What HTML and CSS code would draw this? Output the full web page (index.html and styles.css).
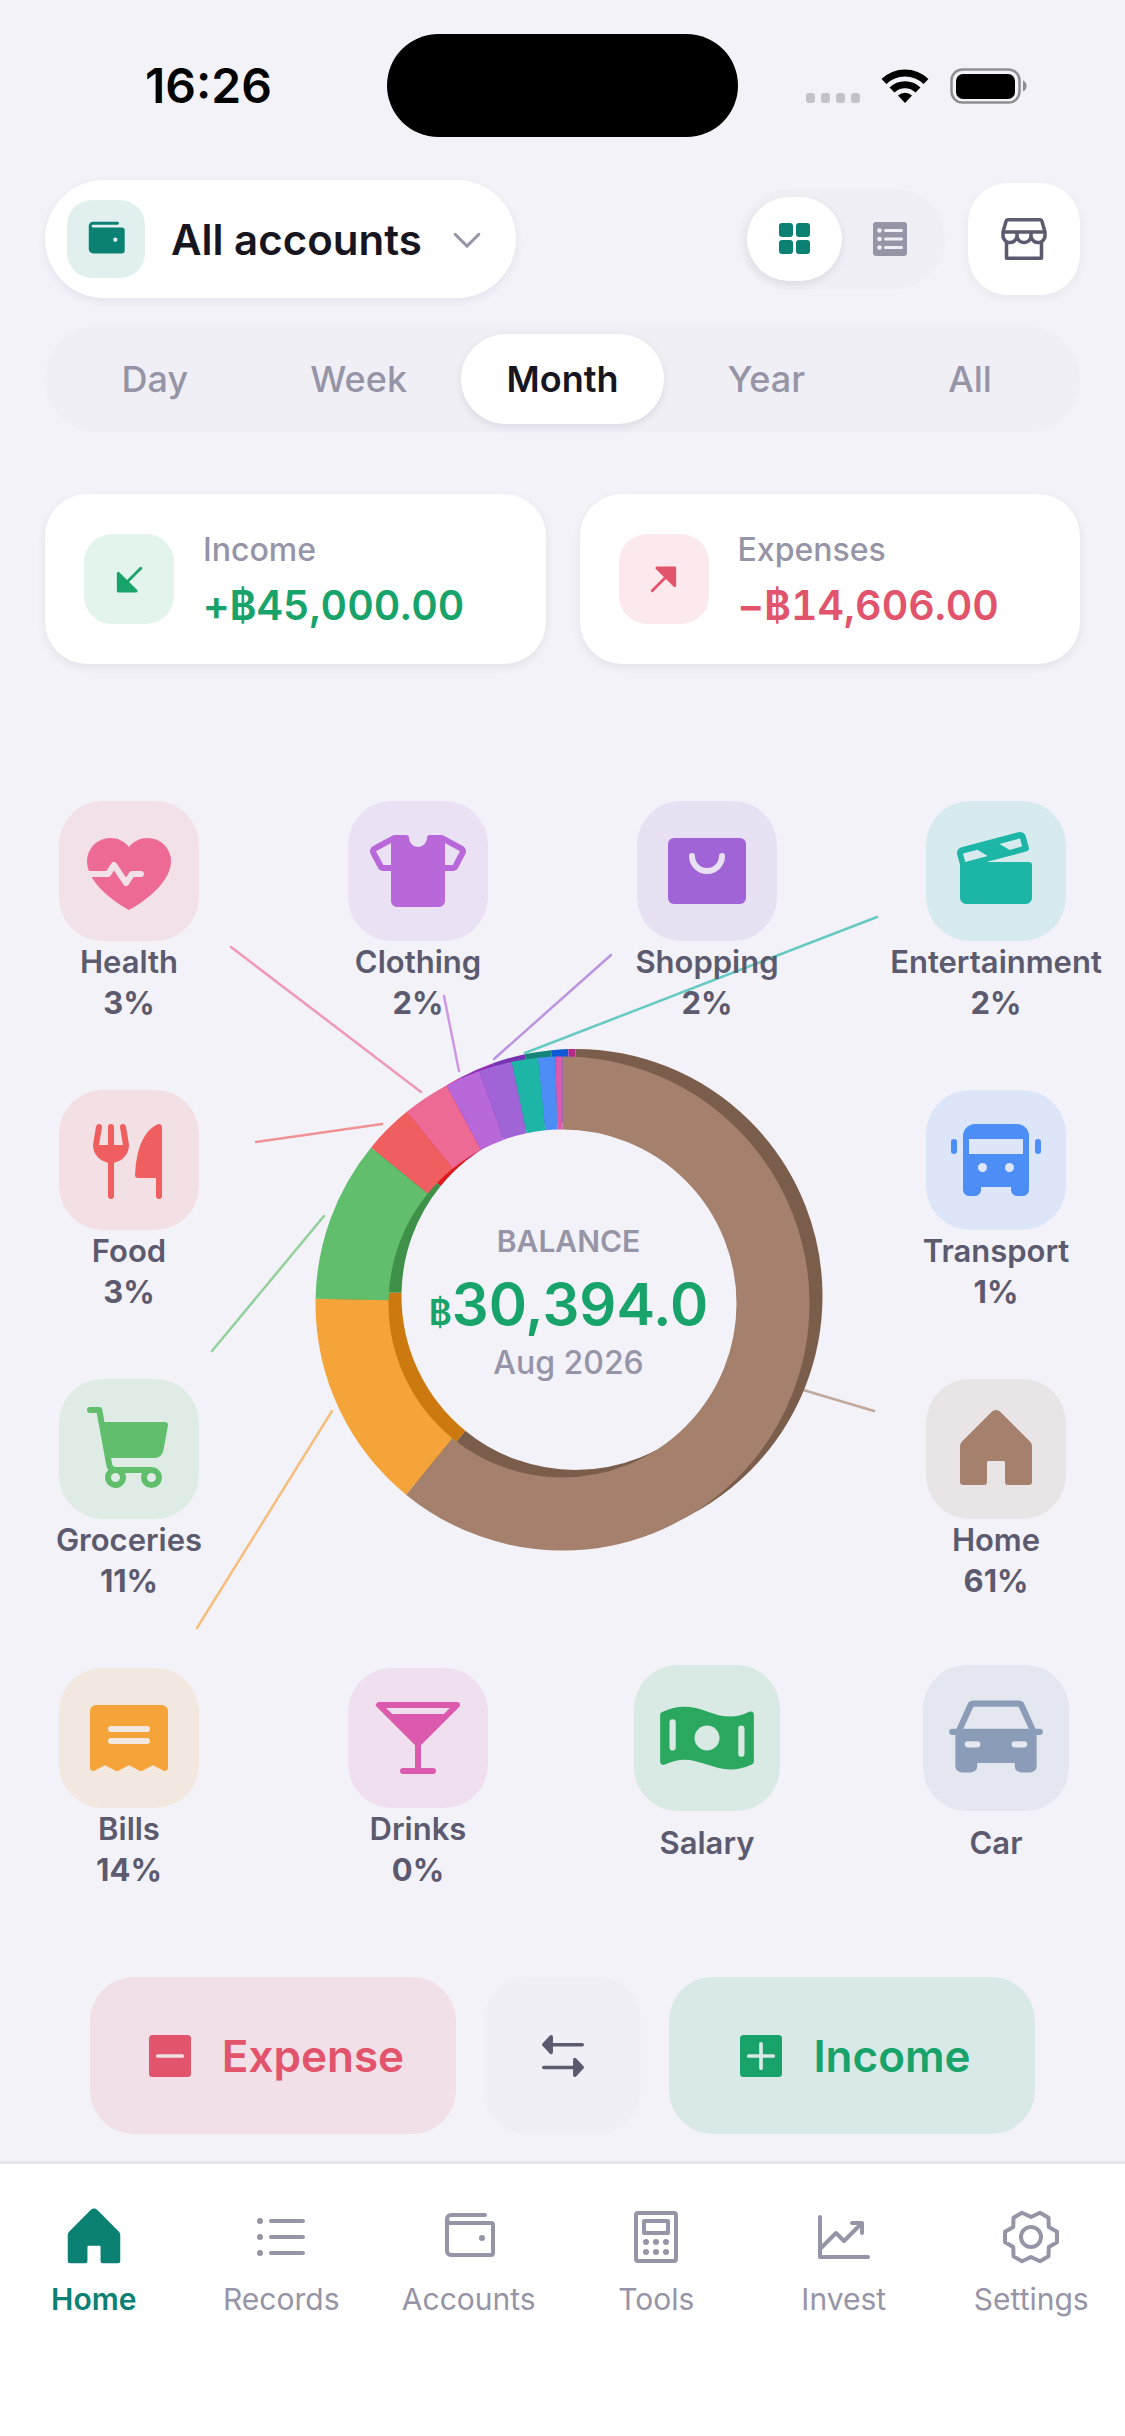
FILE: index.html
```html
<!DOCTYPE html>
<html lang="en">
<head>
  <meta charset="utf-8">
  <meta name="viewport" content="width=device-width, initial-scale=1.0">
  <title>Home</title>
  <link rel="stylesheet" href="styles.css">
</head>
<body>

  <div class="status">
    <span class="time">16:26</span>
    <span class="island"></span>
    <div class="signals">
      <svg width="54" height="36" viewBox="0 0 54 36" fill="#c3c2c8"><rect y="25" width="9" height="10" rx="3"/><rect x="15" y="25" width="9" height="10" rx="3"/><rect x="30" y="25" width="9" height="10" rx="3"/><rect x="45" y="25" width="9" height="10" rx="3"/></svg>
      <svg width="48" height="36" viewBox="0 0 48 36" fill="none" stroke="#000" stroke-width="7"><path d="M3 13.500a30 30 0 0 1 42 0"/><path d="M11 22a18.500 18.500 0 0 1 26 0"/><path d="M24 35l-7-7.500a10.500 10.500 0 0 1 14 0z" fill="#000" stroke="none"/></svg>
      <svg width="78" height="36" viewBox="0 0 78 36"><rect x="1.500" y="1.500" width="68" height="33" rx="11" fill="none" stroke="#8e8e92" stroke-width="2.500"/><rect x="6" y="6" width="59" height="25" rx="7"/><path d="M73 12.500a6 6 0 0 1 0 11z" fill="#8e8e92"/></svg>
    </div>
  </div>

  <header class="top">
    <button class="account">
      <span class="account-icon"><svg width="46" height="46" viewBox="0 0 256 256" fill="#0b8174"><path d="M216,64H56a8,8,0,0,1,0-16H192a8,8,0,0,0,0-16H56A24,24,0,0,0,32,56V184a24,24,0,0,0,24,24H216a16,16,0,0,0,16-16V80A16,16,0,0,0,216,64Zm-36,80a12,12,0,1,1,12-12A12,12,0,0,1,180,144Z"/></svg></span>
      All accounts
      <svg width="38" height="38" viewBox="0 0 256 256" class="line" stroke-width="20"><path d="M48,96l80,80 80-80"/></svg>
    </button>
    <div class="toggle">
      <button class="view on" aria-label="Grid view"><svg width="32" height="32" viewBox="0 0 32 32" fill="#0b8174"><rect width="14" height="14" rx="3"/><rect x="17" width="14" height="14" rx="3"/><rect y="17" width="14" height="14" rx="3"/><rect x="17" y="17" width="14" height="14" rx="3"/></svg></button>
      <button class="view" aria-label="List view"><svg width="34" height="34" viewBox="0 0 34 34"><rect width="34" height="34" rx="3" fill="#9694a7"/><g fill="#f0eff5"><circle cx="6.500" cy="8.500" r="2.300"/><circle cx="6.500" cy="17" r="2.300"/><circle cx="6.500" cy="25.500" r="2.300"/><rect x="11" y="7" width="19" height="3" rx="1.500"/><rect x="11" y="15.500" width="19" height="3" rx="1.500"/><rect x="11" y="24" width="19" height="3" rx="1.500"/></g></svg></button>
    </div>
    <button class="store" aria-label="Store"><svg width="56" height="56" viewBox="0 0 256 256" fill="#5c5a6e"><path d="M232,96a7.890,7.890,0,0,0-.3-2.200L217.350,43.600A16.070,16.070,0,0,0,202,32H54A16.070,16.070,0,0,0,38.650,43.600L24.310,93.800A7.890,7.890,0,0,0,24,96h0v16a40,40,0,0,0,16,32v72a8,8,0,0,0,8,8H208a8,8,0,0,0,8-8V144a40,40,0,0,0,16-32V96ZM54,48H202l11.420,40H42.610Zm50,56h48v8a24,24,0,0,1-48,0Zm-16,0v8a24,24,0,0,1-35.120,21.260,7.880,7.880,0,0,0-1.820-1.060A24,24,0,0,1,40,112v-8ZM200,208H56V151.200a40.570,40.570,0,0,0,8,.8,40,40,0,0,0,32-16,40,40,0,0,0,64,0,40,40,0,0,0,32,16,40.570,40.570,0,0,0,8-.8Zm16-96a24,24,0,0,1-11.070,20.200,8.080,8.080,0,0,0-1.800,1.050A24,24,0,0,1,168,112v-8h48Z"/></svg></button>
  </header>

  <div class="periods">
    <button class="period">Day</button>
    <button class="period">Week</button>
    <button class="period on">Month</button>
    <button class="period">Year</button>
    <button class="period">All</button>
  </div>

  <div class="cards">
    <div class="card">
      <span class="card-icon green"><svg width="45" height="45" viewBox="0 0 256 256" fill="currentColor" stroke="currentColor" stroke-width="16" stroke-linecap="round" stroke-linejoin="round"><path d="M64,92V194H166Z"/><path d="M192,64L110,146"/></svg></span>
      <div>
        <div class="card-label">Income</div>
        <div class="amount green-text">+฿45,000.00</div>
      </div>
    </div>
    <div class="card">
      <span class="card-icon red"><svg width="45" height="45" viewBox="0 0 256 256" fill="currentColor" stroke="currentColor" stroke-width="16" stroke-linecap="round" stroke-linejoin="round"><path d="M192,164V62H90Z"/><path d="M64,192L146,110"/></svg></span>
      <div>
        <div class="card-label">Expenses</div>
        <div class="amount red-text">−฿14,606.00</div>
      </div>
    </div>
  </div>

  <main class="wheel">
    <!-- leader lines and donut -->
    <svg class="chart" viewBox="0 801 1125 1156">
      <g stroke-width="2.500" stroke-linecap="round" opacity=".65">
        <path d="M231 947L421 1092" stroke="#ed6a94"/>
        <path d="M256 1142L382 1124" stroke="#ef5f5f"/>
        <path d="M324 1216L212 1351" stroke="#60be6c"/>
        <path d="M332 1411L197 1628" stroke="#f5a43a"/>
        <path d="M444 996L459 1071" stroke="#b968d9"/>
        <path d="M494 1059L611 955" stroke="#a064d6"/>
        <path d="M525 1053L877 917" stroke="#1db5a6"/>
        <path d="M800 1389L874 1411" stroke="#a5816d"/>
      </g>
      <g fill="none" stroke-width="73" transform="rotate(-90 575.500 1296)">
        <circle cx="575.500" cy="1296" r="210.500" pathLength="360" stroke="#7b5d4c" stroke-dasharray="219.300 360"/>
        <circle cx="575.500" cy="1296" r="210.500" pathLength="360" stroke="#cc7a0f" stroke-dasharray="51.800 360" stroke-dashoffset="-219.300"/>
        <circle cx="575.500" cy="1296" r="210.500" pathLength="360" stroke="#3f9149" stroke-dasharray="38.100 360" stroke-dashoffset="-271.100"/>
        <circle cx="575.500" cy="1296" r="210.500" pathLength="360" stroke="#dc1a1e" stroke-dasharray="11.700 360" stroke-dashoffset="-309.200"/>
        <circle cx="575.500" cy="1296" r="210.500" pathLength="360" stroke="#d3235e" stroke-dasharray="11.100 360" stroke-dashoffset="-320.900"/>
        <circle cx="575.500" cy="1296" r="210.500" pathLength="360" stroke="#8d30b2" stroke-dasharray="8.300 360" stroke-dashoffset="-332"/>
        <circle cx="575.500" cy="1296" r="210.500" pathLength="360" stroke="#7532b1" stroke-dasharray="7.800 360" stroke-dashoffset="-340.300"/>
        <circle cx="575.500" cy="1296" r="210.500" pathLength="360" stroke="#148476" stroke-dasharray="6.200 360" stroke-dashoffset="-348.100"/>
        <circle cx="575.500" cy="1296" r="210.500" pathLength="360" stroke="#1059d8" stroke-dasharray="4 360" stroke-dashoffset="-354.300"/>
        <circle cx="575.500" cy="1296" r="210.500" pathLength="360" stroke="#b52a86" stroke-dasharray="1.700 360" stroke-dashoffset="-358.300"/>
      </g>
      <g fill="none" stroke-width="73" transform="rotate(-90 562.500 1303.500)">
        <circle cx="562.500" cy="1303.500" r="210.500" pathLength="360" stroke="#a5816d" stroke-dasharray="219.300 360"/>
        <circle cx="562.500" cy="1303.500" r="210.500" pathLength="360" stroke="#f5a43a" stroke-dasharray="51.800 360" stroke-dashoffset="-219.300"/>
        <circle cx="562.500" cy="1303.500" r="210.500" pathLength="360" stroke="#60be6c" stroke-dasharray="38.100 360" stroke-dashoffset="-271.100"/>
        <circle cx="562.500" cy="1303.500" r="210.500" pathLength="360" stroke="#ef5f5f" stroke-dasharray="11.700 360" stroke-dashoffset="-309.200"/>
        <circle cx="562.500" cy="1303.500" r="210.500" pathLength="360" stroke="#ed6a94" stroke-dasharray="11.100 360" stroke-dashoffset="-320.900"/>
        <circle cx="562.500" cy="1303.500" r="210.500" pathLength="360" stroke="#b968d9" stroke-dasharray="8.300 360" stroke-dashoffset="-332"/>
        <circle cx="562.500" cy="1303.500" r="210.500" pathLength="360" stroke="#a064d6" stroke-dasharray="7.800 360" stroke-dashoffset="-340.300"/>
        <circle cx="562.500" cy="1303.500" r="210.500" pathLength="360" stroke="#1db5a6" stroke-dasharray="6.200 360" stroke-dashoffset="-348.100"/>
        <circle cx="562.500" cy="1303.500" r="210.500" pathLength="360" stroke="#4d8df6" stroke-dasharray="4 360" stroke-dashoffset="-354.300"/>
        <circle cx="562.500" cy="1303.500" r="210.500" pathLength="360" stroke="#db5aae" stroke-dasharray="1.700 360" stroke-dashoffset="-358.300"/>
      </g>
    </svg>

    <button class="cat health">
      <span class="tile"><svg viewBox="0 0 256 256"><path d="M128,232C124,230 16,172 16,102A62,62 0 0 1 78,40C98.600,40 116.700,49 128,64C139.300,49 157.400,40 178,40A62,62 0 0 1 240,102C240,172 132,230 128,232Z"/><path class="cut" d="M4,136H72L88,112L120,160L136,136H160"/></svg></span>
      <span class="name">Health</span><span class="pct">3%</span>
    </button>
    <button class="cat clothing">
      <span class="tile"><svg viewBox="0 0 256 256"><path d="M247.590,61.220,195.830,33A8,8,0,0,0,192,32H160a8,8,0,0,0-8,8,24,24,0,0,1-48,0,8,8,0,0,0-8-8H64a7.840,7.840,0,0,0-3.810,1L8.410,61.220A15.760,15.760,0,0,0,1.820,82.480l19.270,36.810A16.370,16.370,0,0,0,35.670,128H56v80a16,16,0,0,0,16,16H184a16,16,0,0,0,16-16V128h20.340a16.370,16.370,0,0,0,14.580-8.710l19.270-36.810A15.760,15.760,0,0,0,247.590,61.220ZM35.670,112L16.090,75.260,56,53.480V112ZM220.340,112H200V53.480l39.920,21.780Z"/></svg></span>
      <span class="name">Clothing</span><span class="pct">2%</span>
    </button>
    <button class="cat shopping">
      <span class="tile"><svg viewBox="0 0 256 256"><rect x="24" y="40" width="208" height="176" rx="16"/><path class="cut" d="M168,88a40,40,0,0,1-80,0"/></svg></span>
      <span class="name">Shopping</span><span class="pct">2%</span>
    </button>
    <button class="cat fun">
      <span class="tile"><svg viewBox="0 0 256 256"><path d="M216,104H102.090L210,75.510a8,8,0,0,0,5.680-9.840l-8.160-30a15.930,15.930,0,0,0-19.420-11.130L35.810,64.740a15.750,15.750,0,0,0-9.700,7.400,15.510,15.510,0,0,0-1.550,12L32,111.560V200a16,16,0,0,0,16,16H208a16,16,0,0,0,16-16V112A8,8,0,0,0,216,104ZM40,81L78,71L106,88L46,104ZM137,56L192,41L198,62L165,72Z" fill-rule="evenodd"/></svg></span>
      <span class="name">Entertainment</span><span class="pct">2%</span>
    </button>

    <button class="cat food">
      <span class="tile"><svg viewBox="0 0 256 256"><path d="M216,40V224a8,8,0,0,1-16,0V176H152a8,8,0,0,1-8-8,268.750,268.750,0,0,1,7.220-56.880c9.780-40.490,28.320-67.630,53.630-78.470A8,8,0,0,1,216,40Zm-96.110-1.310a8,8,0,1,0-15.780,2.630L111.890,88H88V40a8,8,0,0,0-16,0V88H48.110l7.780-46.680a8,8,0,1,0-15.780-2.630l-8,48A8.170,8.170,0,0,0,32,88a48.070,48.070,0,0,0,40,47.320V224a8,8,0,0,0,16,0V135.320A48.070,48.070,0,0,0,128,88a8.170,8.170,0,0,0-.11-1.310Z"/></svg></span>
      <span class="name">Food</span><span class="pct">3%</span>
    </button>
    <div class="balance">
      <div class="balance-title">BALANCE</div>
      <div class="balance-sum"><small>฿</small>30,394.0</div>
      <div class="balance-date">Aug 2026</div>
    </div>
    <button class="cat transport">
      <span class="tile"><svg viewBox="0 0 256 256"><path d="M184,32H72A32,32,0,0,0,40,64V208a16,16,0,0,0,16,16H72a16,16,0,0,0,16-16V200h80v8a16,16,0,0,0,16,16h16a16,16,0,0,0,16-16V64A32,32,0,0,0,184,32ZM56,72H200v40H56ZM92,136a12,12,0,1,1-.1,0ZM164,136a12,12,0,1,1-.1,0Z" fill-rule="evenodd"/><rect x="8" y="72" width="16" height="40" rx="8"/><rect x="232" y="72" width="16" height="40" rx="8"/></svg></span>
      <span class="name">Transport</span><span class="pct">1%</span>
    </button>

    <button class="cat groceries">
      <span class="tile"><svg viewBox="0 0 256 256"><path d="M230.140,58.870A8,8,0,0,0,224,56H62.680L56.600,22.570A8,8,0,0,0,48.730,16H24a8,8,0,0,0,0,16h18L67.560,172.290a24,24,0,0,0,5.330,11.270,28,28,0,1,0,44.400,8.440h45.420A27.750,27.750,0,0,0,160,204a28,28,0,1,0,28-28H91.170a8,8,0,0,1-7.870-6.570L80.130,152h116a24,24,0,0,0,23.610-19.710l12.160-66.860A8,8,0,0,0,230.140,58.870ZM104,204a12,12,0,1,1-12-12A12,12,0,0,1,104,204Zm96,0a12,12,0,1,1-12-12A12,12,0,0,1,200,204Z" fill-rule="evenodd"/></svg></span>
      <span class="name">Groceries</span><span class="pct">11%</span>
    </button>
    <button class="cat house">
      <span class="tile"><svg viewBox="0 0 256 256"><path d="M224,120v96a8,8,0,0,1-8,8H160a8,8,0,0,1-8-8V164a4,4,0,0,0-4-4H108a4,4,0,0,0-4,4v52a8,8,0,0,1-8,8H40a8,8,0,0,1-8-8V120a16,16,0,0,1,4.690-11.310l80-80a16,16,0,0,1,22.620,0l80,80A16,16,0,0,1,224,120Z"/></svg></span>
      <span class="name">Home</span><span class="pct">61%</span>
    </button>

    <button class="cat bills">
      <span class="tile"><svg viewBox="0 0 256 256"><path d="M216,40H40A16,16,0,0,0,24,56V208a8,8,0,0,0,11.580,7.150L64,200.940l28.420,14.210a8,8,0,0,0,7.160,0L128,200.940l28.420,14.210a8,8,0,0,0,7.160,0L192,200.940l28.420,14.210A8,8,0,0,0,232,208V56A16,16,0,0,0,216,40ZM176,144H80a8,8,0,0,1,0-16h96a8,8,0,0,1,0,16Zm0-32H80a8,8,0,0,1,0-16h96a8,8,0,0,1,0,16Z"/></svg></span>
      <span class="name">Bills</span><span class="pct">14%</span>
    </button>
    <button class="cat drinks">
      <span class="tile"><svg viewBox="0 0 256 256"><path d="M48,64H208L128,144Z"/><path d="M24,40H232L128,144ZM128,144V216M88,216H168" fill="none" stroke="currentColor" stroke-width="16" stroke-linecap="round" stroke-linejoin="round"/></svg></span>
      <span class="name">Drinks</span><span class="pct">0%</span>
    </button>
    <button class="cat salary empty">
      <span class="tile"><svg viewBox="0 0 256 256"><path d="M8,69a8,8,0,0,1,4-7C58,40,93,48,128,60C165,73,196,81,236,61A8,8,0,0,1,248,68V188a8,8,0,0,1-4,7C198,217,163,208,128,196C91,183,60,176,20,196A8,8,0,0,1,8,189Z"/><circle cx="128" cy="128" r="32" fill="var(--soft)"/><path class="cut" d="M40,88V152M216,104V168"/></svg></span>
      <span class="name">Salary</span>
    </button>
    <button class="cat car empty">
      <span class="tile"><svg viewBox="0 0 256 256"><path d="M24,112H232V200a16,16,0,0,1-16,16H192a16,16,0,0,1-16-16V192H80v8a16,16,0,0,1-16,16H40a16,16,0,0,1-16-16Z"/><path d="M16,112H240M32,112L64,42Q66,40 69,40H187Q190,40 192,42L224,112" fill="none" stroke="currentColor" stroke-width="16" stroke-linecap="round"/><path class="cut" d="M56,144H80M176,144H200"/></svg></span>
      <span class="name">Car</span>
    </button>
  </main>

  <div class="actions">
    <button class="action expense"><svg width="56" height="56" viewBox="0 0 256 256"><rect x="32" y="32" width="192" height="192" rx="16" fill="currentColor"/><path d="M72,128H184" stroke="#f1e0e7" stroke-width="17" stroke-linecap="round"/></svg>Expense</button>
    <button class="action swap" aria-label="Transfer"><svg width="56" height="56" viewBox="0 0 256 256" fill="currentColor" stroke="currentColor" stroke-width="16" stroke-linecap="round" stroke-linejoin="round"><path d="M40,76L74,40V112Z"/><path d="M74,76H216"/><path d="M216,180L182,144V216Z"/><path d="M182,180H40"/></svg></button>
    <button class="action income"><svg width="56" height="56" viewBox="0 0 256 256"><rect x="32" y="32" width="192" height="192" rx="16" fill="currentColor"/><path d="M72,128H184M128,72V184" stroke="#d9e9e7" stroke-width="17" stroke-linecap="round"/></svg>Income</button>
  </div>

  <nav class="tabs">
    <a class="tab on" href="#"><svg width="70" height="70" viewBox="0 0 256 256" fill="currentColor"><path d="M224,120v96a8,8,0,0,1-8,8H160a8,8,0,0,1-8-8V164a4,4,0,0,0-4-4H108a4,4,0,0,0-4,4v52a8,8,0,0,1-8,8H40a8,8,0,0,1-8-8V120a16,16,0,0,1,4.690-11.310l80-80a16,16,0,0,1,22.620,0l80,80A16,16,0,0,1,224,120Z"/></svg>Home</a>
    <a class="tab" href="#"><svg width="64" height="64" viewBox="0 0 256 256" class="line" stroke-width="16"><path d="M88,64H216M88,128H216M88,192H216"/><g fill="currentColor" stroke="none"><circle cx="44" cy="64" r="12"/><circle cx="44" cy="128" r="12"/><circle cx="44" cy="192" r="12"/></g></svg>Records</a>
    <a class="tab" href="#"><svg width="64" height="64" viewBox="0 0 256 256" fill="currentColor"><path d="M216,64H56a8,8,0,0,1,0-16H192a8,8,0,0,0,0-16H56A24,24,0,0,0,32,56V184a24,24,0,0,0,24,24H216a16,16,0,0,0,16-16V80A16,16,0,0,0,216,64Zm0,128H56a8,8,0,0,1-8-8V78.630A23.840,23.840,0,0,0,56,80H216Zm-48-60a12,12,0,1,1,12,12A12,12,0,0,1,168,132Z"/></svg>Accounts</a>
    <a class="tab" href="#"><svg width="64" height="64" viewBox="0 0 256 256" class="line" stroke-width="16"><rect x="48" y="32" width="160" height="192" rx="8"/><path d="M80,64H176V112H80Z"/><g fill="currentColor" stroke="none"><circle cx="88" cy="148" r="12"/><circle cx="128" cy="148" r="12"/><circle cx="168" cy="148" r="12"/><circle cx="88" cy="188" r="12"/><circle cx="128" cy="188" r="12"/><circle cx="168" cy="188" r="12"/></g></svg>Tools</a>
    <a class="tab" href="#"><svg width="64" height="64" viewBox="0 0 256 256" class="line" stroke-width="16"><path d="M32,48V208H224M32,176L96,112L128,144L200,72M160,72H200V112"/></svg>Invest</a>
    <a class="tab" href="#"><svg width="64" height="64" viewBox="0 0 256 256" class="line" stroke-width="16"><circle cx="128" cy="128" r="40"/><path d="M128,48L164,31L198,51L199,88L232,107L232,149L199,168L198,205L164,225L128,208L92,225L58,205L57,168L24,149L24,107L57,88L58,51L92,31Z"/></svg>Settings</a>
  </nav>

</body>
</html>
```
FILE: styles.css
```css
* {
  box-sizing: border-box;
}
body {
  margin: 0;
  min-height: 100vh;
  display: flex;
  flex-direction: column;
  background: #f3f2f8;
  font-family: Inter, "Liberation Sans", sans-serif;
  color: #161520;
}
button {
  border: 0;
  padding: 0;
  background: none;
  font: inherit;
  color: inherit;
}
svg {
  display: block;
  flex: none;
}
.line {
  fill: none;
  stroke: #9694a7;
  stroke-linecap: round;
  stroke-linejoin: round;
}

/* status bar */
.status {
  display: grid;
  grid-template-columns: 1fr auto 1fr;
  align-items: center;
  padding: 34px 97px 43px 145px;
}
.time {
  font-size: 48px;
  font-weight: 600;
  color: #000;
}
.island {
  width: 351px;
  height: 103px;
  border-radius: 52px;
  background: #000;
  margin-left: -48px;
}
.signals {
  display: flex;
  justify-content: flex-end;
  gap: 21px;
}

/* header */
.top {
  display: flex;
  align-items: center;
  padding: 0 45px;
}
.account {
  display: flex;
  align-items: center;
  gap: 26px;
  height: 118px;
  padding: 0 30px 0 22px;
  border-radius: 59px;
  background: #fff;
  box-shadow: 0 3px 8px rgba(40, 35, 80, .07);
  font-size: 42px;
  font-weight: 600;
}
.account-icon {
  display: grid;
  place-items: center;
  width: 78px;
  height: 78px;
  border-radius: 25px;
  background: #e1f0ee;
}
.toggle {
  display: flex;
  margin-left: auto;
  margin-right: 23px;
  padding: 8px;
  border-radius: 51px;
  background: #f0eff5;
}
.view {
  display: grid;
  place-items: center;
  width: 95px;
  height: 84px;
  border-radius: 42px;
}
.view.on,
.period.on {
  background: #fff;
  box-shadow: 0 3px 8px rgba(40, 35, 80, .1);
}
.store {
  display: grid;
  place-items: center;
  width: 112px;
  height: 112px;
  border-radius: 40px;
  background: #fff;
  box-shadow: 0 3px 8px rgba(40, 35, 80, .05);
}

/* Day / Week / Month ... */
.periods {
  display: flex;
  margin: 28px 45px 0;
  padding: 8px;
  border-radius: 53px;
  background: #f0eff5;
}
.period {
  flex: 1;
  height: 90px;
  border-radius: 45px;
  font-size: 36px;
  font-weight: 500;
  color: #9694a7;
}
.period.on {
  font-weight: 600;
  color: #161520;
}

/* income and expenses cards */
.cards {
  display: flex;
  gap: 34px;
  margin: 62px 45px 0;
}
.card {
  flex: 1;
  display: flex;
  align-items: center;
  gap: 29px;
  height: 170px;
  padding: 0 39px;
  border-radius: 42px;
  background: #fff;
  box-shadow: 0 3px 8px rgba(40, 35, 80, .08);
}
.card-icon {
  display: grid;
  place-items: center;
  width: 90px;
  height: 90px;
  border-radius: 28px;
}
.green {
  background: #e3f4ec;
  color: #17a369;
}
.red {
  background: #fbe9ed;
  color: #e1546b;
}
.green-text {
  color: #17a369;
}
.red-text {
  color: #e1546b;
}
.card-label {
  font-size: 32px;
  line-height: 52px;
  font-weight: 500;
  color: #9694a7;
}
.amount {
  font-size: 41px;
  line-height: 58px;
  font-weight: 600;
  font-variant-numeric: tabular-nums;
}

/* categories around the donut */
.wheel {
  position: relative;
  display: grid;
  grid-template-columns: repeat(4, 168px);
  grid-auto-rows: 289px;
  justify-content: space-between;
  margin-top: 137px;
  padding: 0 45px;
}
.chart {
  position: absolute;
  top: 0;
  left: 0;
  width: 100%;
}
.cat {
  position: relative;
  display: flex;
  flex-direction: column;
  align-items: center;
  font-size: 31px;
  line-height: 41px;
  white-space: nowrap;
  color: #5c5a6e;
}
.tile {
  display: grid;
  place-items: center;
  width: 140px;
  height: 140px;
  border-radius: 44px;
  background: var(--soft);
  color: var(--main);
}
.tile svg {
  width: 96px;
  height: 96px;
  fill: currentColor;
}
.tile .cut {
  fill: none;
  stroke: var(--soft);
  stroke-width: 16px;
  stroke-linecap: round;
  stroke-linejoin: round;
}
.name {
  font-weight: 600;
}
.pct {
  font-weight: 700;
}
.empty {
  margin-top: -3px;
}
.empty .tile {
  width: 146px;
  height: 146px;
  margin-bottom: 11px;
}
.empty .tile svg {
  width: 100px;
  height: 100px;
}
.transport,
.house {
  grid-column: 4;
}
.groceries {
  grid-column: 1;
  grid-row: 3;
}
.house {
  grid-row: 3;
}

.health { --main: #ed6a94; --soft: #f3e1ea; }
.clothing { --main: #b968d9; --soft: #eae1f5; }
.shopping { --main: #a064d6; --soft: #e8e1f3; }
.fun { --main: #1db5a6; --soft: #d7ebee; }
.food { --main: #ef5f5f; --soft: #f3e0e4; }
.transport { --main: #4d8df6; --soft: #dde6f9; }
.groceries { --main: #60be6c; --soft: #dfece5; }
.house { --main: #a5816d; --soft: #e9e5e7; }
.bills { --main: #f5a43a; --soft: #f3e8e0; }
.drinks { --main: #db5aae; --soft: #f0dfee; }
.salary { --main: #2ba85f; --soft: #d9e9e4; }
.car { --main: #8a9cb8; --soft: #e4e7ef; }

.balance {
  position: relative;
  grid-column: 2 / 4;
  grid-row: 2 / 4;
  padding: 130px 0 0 12px;
  text-align: center;
  color: #9694a7;
}
.balance-title {
  font-size: 30px;
  line-height: 42px;
  font-weight: 600;
}
.balance-sum {
  font-size: 58px;
  line-height: 84px;
  font-weight: 600;
  color: #17a369;
}
.balance-sum small {
  font-size: 35px;
  line-height: 1;
}
.balance-date {
  font-size: 32px;
  line-height: 34px;
  font-weight: 500;
}

/* bottom buttons */
.actions {
  display: flex;
  gap: 28px;
  margin: 20px 90px 27px;
}
.action {
  flex: 1;
  display: flex;
  align-items: center;
  justify-content: center;
  gap: 24px;
  height: 157px;
  border-radius: 44px;
  font-size: 44px;
  font-weight: 600;
}
.expense {
  background: #f1e0e7;
  color: #e1546b;
}
.swap {
  flex: none;
  width: 157px;
  background: #f0eff5;
  color: #5c5a6e;
}
.income {
  background: #d9e9e7;
  color: #17a369;
}

.tabs {
  flex: 1;
  display: flex;
  border-top: 3px solid #e6e5ec;
  background: #fff;
  padding: 37px 0 100px;
}
.tab {
  flex: 1;
  display: flex;
  flex-direction: column;
  align-items: center;
  justify-content: flex-end;
  height: 118px;
  gap: 10px;
  font-size: 30px;
  line-height: 40px;
  color: #9694a7;
  text-decoration: none;
}
.tab.on {
  gap: 7px;
  font-weight: 600;
  color: #0b8174;
}
```
